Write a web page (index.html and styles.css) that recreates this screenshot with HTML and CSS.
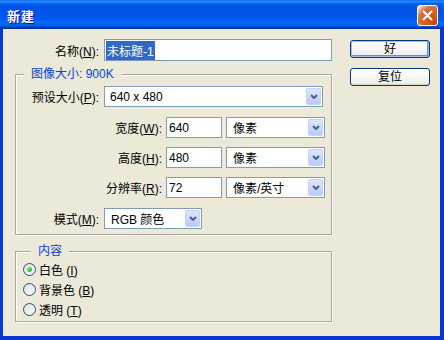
FILE: index.html
```html
<!DOCTYPE html>
<html lang="zh-CN">
<head>
<meta charset="UTF-8">
<title>新建</title>
<link rel="stylesheet" href="styles.css">
</head>
<body>

<div class="window">
    <div class="titlebar">
        <span class="title">新建</span>
        <button class="close" aria-label="关闭">
            <svg width="13" height="13" viewBox="0 0 13 13"><path d="M2 2L11 11M11 2L2 11" stroke="#fff" stroke-width="2" fill="none"/></svg>
        </button>
    </div>

    <div class="dialog">
        <div class="main">
            <div class="row name-row">
                <label class="lbl lbl-wide">名称(<u>N</u>):</label>
                <div class="field name-field"><span class="selected">未标题-1</span></div>
            </div>

            <!-- 图像大小 -->
            <fieldset class="group size-group">
                <legend>图像大小: 900K</legend>
                <div class="row preset-row">
                    <label class="lbl lbl-wide">预设大小(<u>P</u>):</label>
                    <div class="combo preset-combo"><span>640 x 480</span><span class="arrow"><svg width="8" height="5" viewBox="0 0 8 5"><path d="M1 1L4 4L7 1" stroke="#4d6185" stroke-width="2" fill="none"/></svg></span></div>
                </div>
                <div class="row">
                    <label class="lbl lbl-mid">宽度(<u>W</u>):</label>
                    <div class="field num-field">640</div>
                    <div class="combo unit-combo"><span>像素</span><span class="arrow"><svg width="8" height="5" viewBox="0 0 8 5"><path d="M1 1L4 4L7 1" stroke="#4d6185" stroke-width="2" fill="none"/></svg></span></div>
                </div>
                <div class="row">
                    <label class="lbl lbl-mid">高度(<u>H</u>):</label>
                    <div class="field num-field">480</div>
                    <div class="combo unit-combo"><span>像素</span><span class="arrow"><svg width="8" height="5" viewBox="0 0 8 5"><path d="M1 1L4 4L7 1" stroke="#4d6185" stroke-width="2" fill="none"/></svg></span></div>
                </div>
                <div class="row res-row">
                    <label class="lbl lbl-mid">分辨率(<u>R</u>):</label>
                    <div class="field num-field">72</div>
                    <div class="combo unit-combo"><span>像素/英寸</span><span class="arrow"><svg width="8" height="5" viewBox="0 0 8 5"><path d="M1 1L4 4L7 1" stroke="#4d6185" stroke-width="2" fill="none"/></svg></span></div>
                </div>
                <div class="row">
                    <label class="lbl lbl-wide">模式(<u>M</u>):</label>
                    <div class="combo mode-combo"><span>RGB 颜色</span><span class="arrow"><svg width="8" height="5" viewBox="0 0 8 5"><path d="M1 1L4 4L7 1" stroke="#4d6185" stroke-width="2" fill="none"/></svg></span></div>
                </div>
            </fieldset>

            <!-- 内容 -->
            <fieldset class="group content-group">
                <legend>内容</legend>
                <div class="radio-row"><span class="radio checked"></span><span>白色 (<u>I</u>)</span></div>
                <div class="radio-row"><span class="radio"></span><span>背景色 (<u>B</u>)</span></div>
                <div class="radio-row"><span class="radio"></span><span>透明 (<u>T</u>)</span></div>
            </fieldset>
        </div>

        <div class="side">
            <button class="btn btn-default">好</button>
            <button class="btn">复位</button>
        </div>
    </div>
</div>

</body>
</html>
```

FILE: styles.css
```css
html, body {
    margin: 0;
    padding: 0;
}
body {
    background-color: #ece9d8;
    font-family: "Liberation Sans", "Noto Sans CJK SC", sans-serif;
    font-size: 12px;
    color: #000;
}
.window {
    width: 444px;
    height: 340px;
    display: flex;
    flex-direction: column;
}
/* barra de titulo azul estilo XP */
.titlebar {
    height: 29px;
    box-sizing: border-box;
    padding: 2px 6px 0 7px;
    display: flex;
    align-items: center;
    justify-content: space-between;
    background: linear-gradient(to bottom, #0058ee 0%, #3593ff 4%, #288eff 6%, #127dff 8%, #036ffc 10%, #0262ee 14%, #0057e5 20%, #0054e3 24%, #0055eb 56%, #005bf5 66%, #026afe 76%, #0062ef 86%, #0052d6 92%, #0040ab 94%, #003092 100%);
}
.title {
    color: #fff;
    font-family: "Noto Sans CJK SC", sans-serif;
    font-weight: bold;
    font-size: 13px;
    letter-spacing: 1px;
    text-shadow: 1px 1px #0f1089;
}
.close {
    width: 21px;
    height: 21px;
    padding: 0;
    border: 1px solid #fff;
    border-radius: 3px;
    display: flex;
    align-items: center;
    justify-content: center;
    background: radial-gradient(circle at 90% 90%, #cc4600 0%, #dc6527 55%, #cd7546 70%, #ffccb2 90%, #fff 100%);
}
.dialog {
    flex: 1;
    display: flex;
    border-style: solid;
    border-color: #0a36d4;
    border-width: 0 4px 4px 3px;
    padding: 10px 0 0 12px;
}
.main {
    width: 317px;
}
.row {
    display: flex;
    align-items: center;
    height: 21px;
}
.lbl {
    text-align: right;
    white-space: nowrap;
}
.lbl-wide {
    width: 83px;
    margin-right: 5px;
}
.lbl-mid {
    width: 146px;
    margin-right: 4px;
}
.name-row {
    height: 22px;
}
.name-row .lbl {
    width: 84px;
}
.field {
    box-sizing: border-box;
    height: 100%;
    border: 1px solid #7f9db9;
    background-color: #fff;
    display: flex;
    align-items: center;
}
.name-field {
    width: 228px;
    padding-left: 1px;
}
.selected {
    background-color: #316ac5;
    color: #fff;
    padding: 1px 1px;
}
.num-field {
    width: 56px;
    padding-left: 2px;
}
.combo {
    box-sizing: border-box;
    height: 100%;
    border: 1px solid #7f9db9;
    background-color: #fff;
    display: flex;
    align-items: center;
    justify-content: space-between;
    padding: 1px 1px 1px 5px;
}
.arrow {
    box-sizing: border-box;
    width: 15px;
    height: 17px;
    border: 1px solid #c4d3f7;
    border-radius: 2px;
    background: linear-gradient(to bottom, #dde6fc, #b8cbf7);
    display: flex;
    align-items: center;
    justify-content: center;
}
.preset-combo {
    width: 219px;
}
.unit-combo {
    width: 99px;
    margin-left: 4px;
    padding-left: 6px;
}
.mode-combo {
    width: 98px;
    padding-left: 6px;
}
/* caixas de grupo */
.group {
    margin: 0;
    padding: 0;
    border: 1px solid #aca899;
    box-shadow: 1px 1px 0 #fff, inset 1px 1px 0 #fff;
}
.group legend {
    margin-left: 8px;
    padding: 0 7px 0 7px;
    line-height: 14px;
    color: #0046d5;
    background-color: #ece9d8;
}
.size-group {
    margin-top: 6px;
    width: 317px;
    box-sizing: border-box;
    padding: 5px 0 5px 0;
    display: flex;
    flex-direction: column;
    gap: 9px;
}
.preset-row, .res-row {
    margin-bottom: 1px;
}
.content-group {
    margin-top: 9px;
    width: 317px;
    box-sizing: border-box;
    padding: 1px 0 2px 7px;
}
.radio-row {
    display: flex;
    align-items: center;
    height: 20px;
    gap: 3px;
}
.radio {
    box-sizing: border-box;
    width: 13px;
    height: 13px;
    border: 1px solid #1c5180;
    border-radius: 50%;
    background: linear-gradient(135deg, #dcdcd7, #fff);
    display: flex;
    align-items: center;
    justify-content: center;
}
.radio.checked::after {
    content: "";
    width: 5px;
    height: 5px;
    border-radius: 50%;
    background: radial-gradient(circle at 35% 35%, #7be07b, #21a121);
}
/* botoes */
.side {
    margin-left: 18px;
    padding-top: 1px;
    display: flex;
    flex-direction: column;
    gap: 10px;
}
.btn {
    width: 80px;
    height: 18px;
    padding: 0;
    font-family: "Liberation Sans", "Noto Sans CJK SC", sans-serif;
    font-size: 12px;
    line-height: 16px;
    color: #000;
    border: 1px solid #003c74;
    border-radius: 3px;
    background: linear-gradient(to bottom, #fff, #f0f0ea 86%, #d6d0c5);
}
.btn-default {
    box-shadow: inset 0 0 0 1px #a4bdec, inset -1px -1px 0 1px #6a8cd8;
}
```
